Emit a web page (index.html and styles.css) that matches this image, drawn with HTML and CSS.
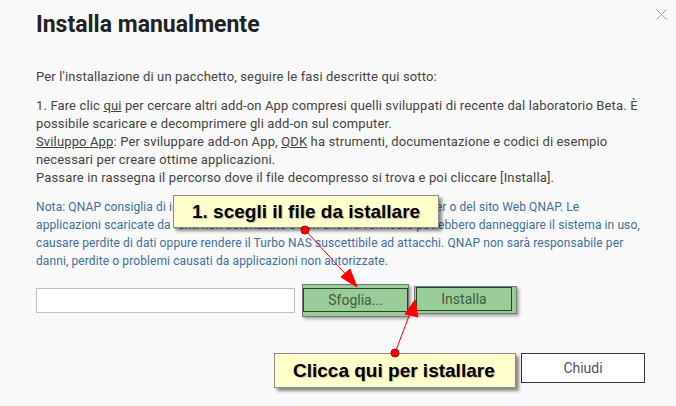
FILE: index.html
```html
<!DOCTYPE html>
<html lang="it">
<head>
  <meta charset="UTF-8" />
  <title>Installa manualmente</title>
  <link rel="stylesheet" href="styles.css">
</head>
<body>
  <div class="dialog">
    <button class="close" aria-label="Chiudi">
      <svg width="11" height="11" viewBox="0 0 11 11">
        <path d="M0.5 0.5 L10.5 10.5 M10.5 0.5 L0.5 10.5" stroke="#a0a0a0" stroke-width="1" fill="none"/>
      </svg>
    </button>

    <h1 class="title">Installa manualmente</h1>

    <div class="content">
      <p>Per l'installazione di un pacchetto, seguire le fasi descritte qui sotto:</p>
      <p>1. Fare clic <u>qui</u> per cercare altri add-on App compresi quelli sviluppati di recente dal laboratorio Beta. È possibile scaricare e decomprimere gli add-on sul computer.<br>
        <u>Sviluppo App</u>: Per sviluppare add-on App, <u>QDK</u> ha strumenti, documentazione e codici di esempio necessari per creare ottime applicazioni.<br>
        Passare in rassegna il percorso dove il file decompresso si trova e poi cliccare [Installa].</p>
      <p class="note">Nota: QNAP consiglia di installare solo applicazioni ottenute dall'App Center o del sito Web QNAP. Le applicazioni scaricate da fonti non autorizzate o non ancora verificate potrebbero danneggiare il sistema in uso, causare perdite di dati oppure rendere il Turbo NAS suscettibile ad attacchi. QNAP non sarà responsabile per danni, perdite o problemi causati da applicazioni non autorizzate.</p>

      <div class="upload">
        <input type="text" class="file-path">
        <span class="mark mark-browse"><button class="btn">Sfoglia...</button></span>
        <span class="mark mark-install"><button class="btn">Installa</button></span>
      </div>
    </div>

    <div class="footer">
      <button class="btn-close">Chiudi</button>
    </div>
  </div>

  <!-- note sovrapposte -->
  <div class="callout callout-file">1. scegli il file da istallare</div>
  <div class="callout callout-install">Clicca qui per istallare</div>

  <svg class="arrows" width="676" height="406" viewBox="0 0 676 406">
    <g stroke="#ff0000" stroke-width="1" fill="#ff0000">
      <line x1="305" y1="230" x2="352" y2="281"/>
      <polygon points="357,287 341,277 350,269"/>
      <circle cx="305" cy="230" r="4" stroke="#b00000"/>

      <line x1="395" y1="353" x2="412" y2="308"/>
      <polygon points="415,300 405,314 418,317"/>
      <circle cx="395" cy="353" r="4" stroke="#b00000"/>
    </g>
  </svg>
</body>
</html>
```

FILE: styles.css
```css
* {
  margin: 0;
  padding: 0;
  box-sizing: border-box;
}

body {
  background: #f9f9f9;
  font-family: Roboto, "Liberation Sans", sans-serif;
  color: #444;
  width: 676px;
  height: 406px;
  overflow: hidden;
  position: relative;
}

.dialog {
  padding: 12px 0 0 36px;
}

.close {
  position: absolute;
  top: 9px;
  right: 9px;
  border: none;
  background: none;
  line-height: 0;
}

.title {
  font-size: 23px;
  font-weight: 700;
  color: #222;
  line-height: 26px;
}

.content {
  margin-top: 30px;
  width: 606px;
  font-size: 13px;
  line-height: 18px;
  letter-spacing: 0.14px;
}

.content p {
  margin-bottom: 11px;
}

.note {
  color: #3f6f9c;
  font-size: 12px;
  letter-spacing: 0.1px;
}

.upload {
  display: flex;
  align-items: center;
  margin-top: 14px;
  height: 32px;
}

.file-path {
  width: 259px;
  height: 25px;
  border: 1px solid #c0c0c0;
  background: #fff;
  margin-right: 7px;
}

/* riquadri verdi evidenziati */
.mark {
  display: flex;
  background: #99cc99;
  border: 1px solid #777;
  box-shadow: 2px 2px 3px rgba(0, 0, 0, 0.35);
}

.mark-browse {
  padding: 3px 0 4px;
}

.mark-install {
  margin-left: 5px;
  padding: 0 4px 2px 1px;
}

.btn {
  font-family: Roboto, sans-serif;
  font-size: 14px;
  color: #3c5f3c;
  background: transparent;
  border: 1px solid #1f4a1f;
  height: 24px;
}

.mark-browse .btn {
  width: 105px;
}

.mark-install .btn {
  width: 96px;
}

.footer {
  display: flex;
  justify-content: flex-end;
  padding-right: 31px;
  margin-top: 37px;
}

.btn-close {
  width: 124px;
  height: 30px;
  background: #fff;
  border: 1px solid #333;
  font-family: Roboto, sans-serif;
  font-size: 14px;
  color: #555;
}

.callout {
  position: absolute;
  background: #ffffcc;
  border: 1px solid #8a8a8a;
  box-shadow: 3px 3px 3px rgba(0, 0, 0, 0.45);
  font-family: "Liberation Sans", Arial, sans-serif;
  font-weight: 700;
  font-size: 19px;
  color: #000;
  text-shadow: 1px 1px 1px rgba(0, 0, 0, 0.25);
}

.callout-file {
  left: 173px;
  top: 195px;
  width: 266px;
  height: 33px;
  padding: 5px 0 0 18px;
}

.callout-install {
  left: 274px;
  top: 353px;
  width: 242px;
  height: 35px;
  padding: 6px 0 0 18px;
}

.arrows {
  position: absolute;
  left: 0;
  top: 0;
  pointer-events: none;
}
```
